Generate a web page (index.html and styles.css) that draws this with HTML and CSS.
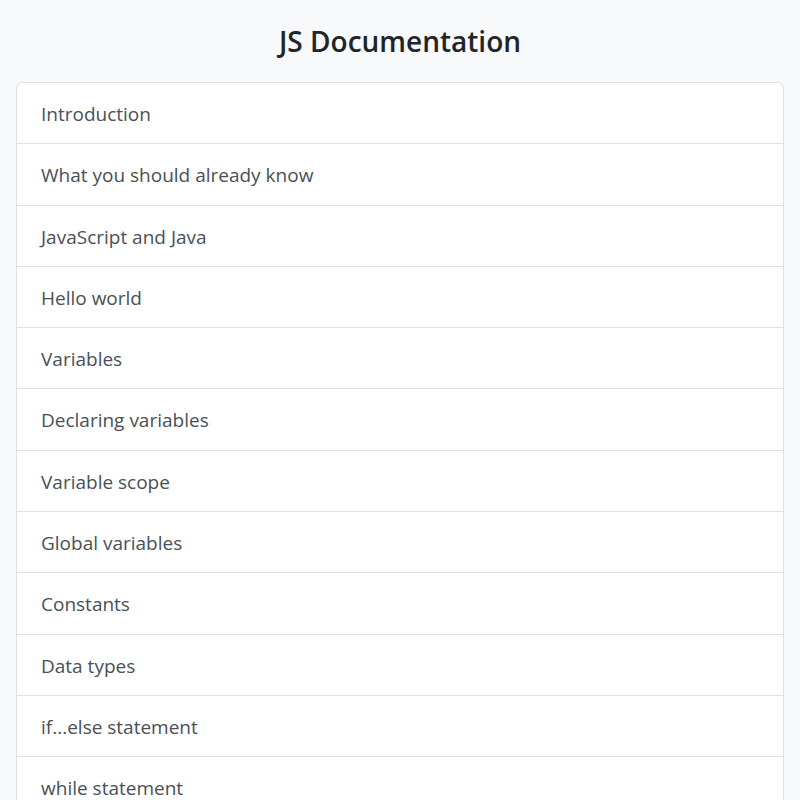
FILE: index.html
```html
<!DOCTYPE html>
<html>
<head>
<meta charset="utf-8">
<link rel="stylesheet" href="styles.css">
</head>
<body>
<div class="page">
  <h1 class="title">JS Documentation</h1>
  <ul class="list">
    <li class="item">Introduction</li>
    <li class="item">What you should already know</li>
    <li class="item">JavaScript and Java</li>
    <li class="item">Hello world</li>
    <li class="item">Variables</li>
    <li class="item">Declaring variables</li>
    <li class="item">Variable scope</li>
    <li class="item">Global variables</li>
    <li class="item">Constants</li>
    <li class="item">Data types</li>
    <li class="item">if...else statement</li>
    <li class="item">while statement</li>
  </ul>
</div>
</body>
</html>
```

FILE: styles.css
```css
html, body {
  margin: 0;
  padding: 0;
  background: #f8f9fa;
  font-family: "Open Sans", "Noto Sans", sans-serif;
  color: #495057;
}
.page {
  padding: 0 16px;
}
.title {
  margin: 0;
  padding: 22px 0 9px;
  text-align: center;
  font-size: 28px;
  font-weight: 600;
  color: #212529;
  line-height: 38px;
}
.list {
  list-style: none;
  margin: 13px 0 0;
  padding: 0;
  background: #fff;
  border: 1px solid #dee2e6;
  border-radius: 6px;
}
.item {
  padding: 16px 24px 14px;
  font-size: 19px;
  line-height: 30.3px;
  border-top: 1px solid #dee2e6;
}
.item:first-child {
  border-top: none;
}
```
